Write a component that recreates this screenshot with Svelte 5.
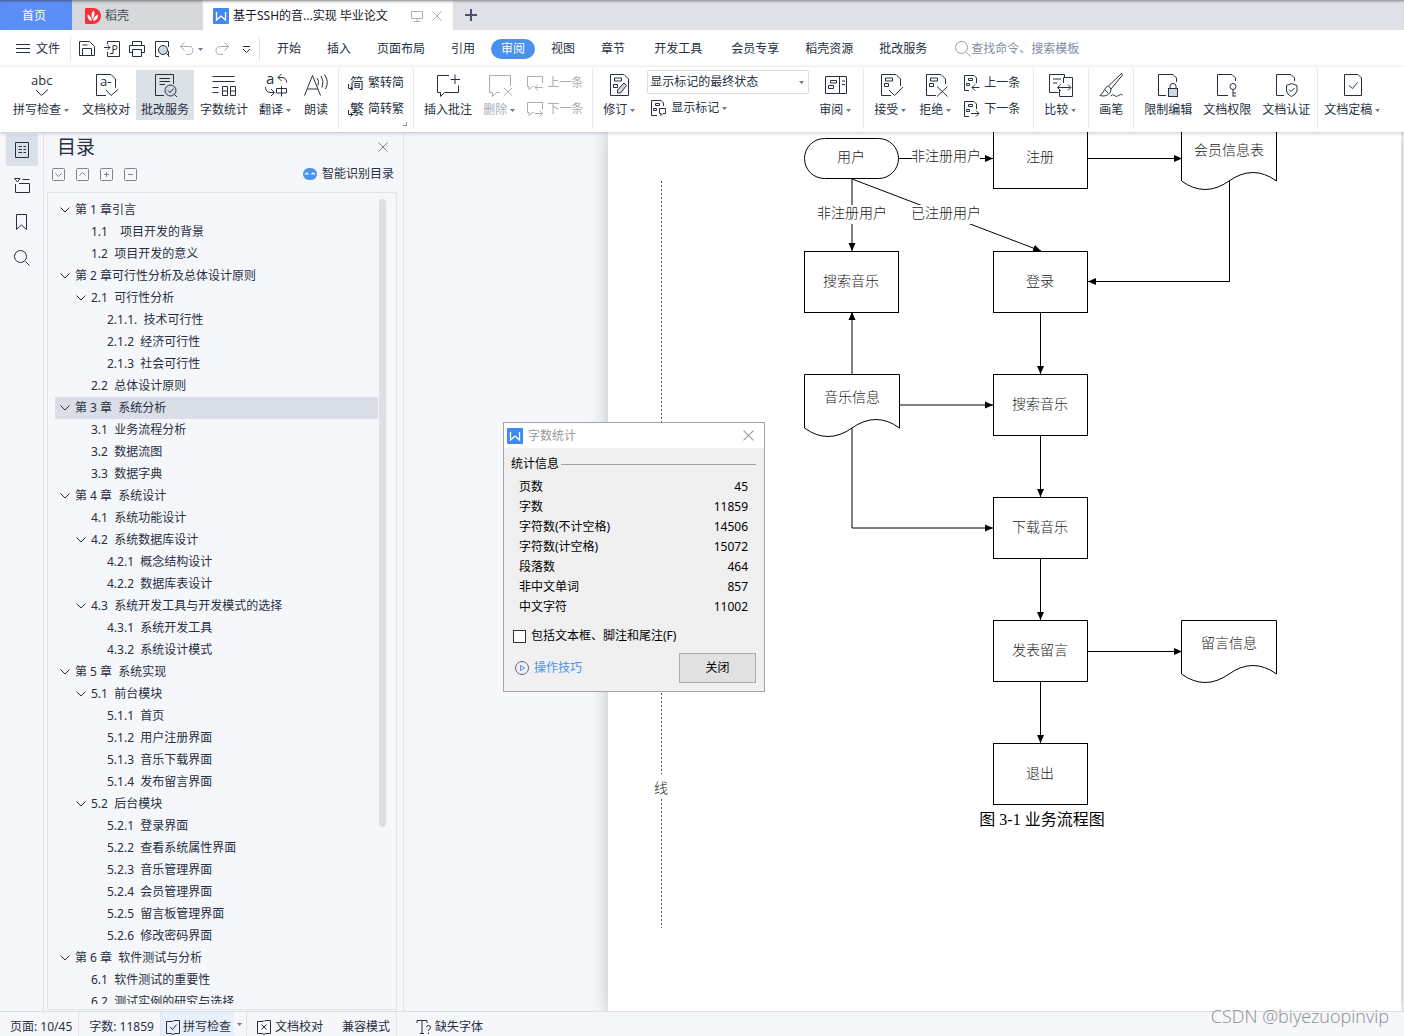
<script lang="ts">
  interface Entry {
    level: number;
    text: string;
    open?: boolean;
    current?: boolean;
  }

  const menus = [
    { label: '开始' },
    { label: '插入' },
    { label: '页面布局' },
    { label: '引用' },
    { label: '审阅', active: true },
    { label: '视图' },
    { label: '章节' },
    { label: '开发工具', wide: true },
    { label: '会员专享' },
    { label: '稻壳资源' },
    { label: '批改服务' }
  ];

  const outline: Entry[] = [
    { level: 1, text: '第 1 章引言', open: true },
    { level: 2, text: '1.1\u3000项目开发的背景' },
    { level: 2, text: '1.2  项目开发的意义' },
    { level: 1, text: '第 2 章可行性分析及总体设计原则', open: true },
    { level: 2, text: '2.1  可行性分析', open: true },
    { level: 3, text: '2.1.1.  技术可行性' },
    { level: 3, text: '2.1.2  经济可行性' },
    { level: 3, text: '2.1.3  社会可行性' },
    { level: 2, text: '2.2  总体设计原则' },
    { level: 1, text: '第 3 章  系统分析', open: true, current: true },
    { level: 2, text: '3.1  业务流程分析' },
    { level: 2, text: '3.2  数据流图' },
    { level: 2, text: '3.3  数据字典' },
    { level: 1, text: '第 4 章  系统设计', open: true },
    { level: 2, text: '4.1  系统功能设计' },
    { level: 2, text: '4.2  系统数据库设计', open: true },
    { level: 3, text: '4.2.1  概念结构设计' },
    { level: 3, text: '4.2.2  数据库表设计' },
    { level: 2, text: '4.3  系统开发工具与开发模式的选择', open: true },
    { level: 3, text: '4.3.1  系统开发工具' },
    { level: 3, text: '4.3.2  系统设计模式' },
    { level: 1, text: '第 5 章  系统实现', open: true },
    { level: 2, text: '5.1  前台模块', open: true },
    { level: 3, text: '5.1.1  首页' },
    { level: 3, text: '5.1.2  用户注册界面' },
    { level: 3, text: '5.1.3  音乐下载界面' },
    { level: 3, text: '5.1.4  发布留言界面' },
    { level: 2, text: '5.2  后台模块', open: true },
    { level: 3, text: '5.2.1  登录界面' },
    { level: 3, text: '5.2.2  查看系统属性界面' },
    { level: 3, text: '5.2.3  音乐管理界面' },
    { level: 3, text: '5.2.4  会员管理界面' },
    { level: 3, text: '5.2.5  留言板管理界面' },
    { level: 3, text: '5.2.6  修改密码界面' },
    { level: 1, text: '第 6 章  软件测试与分析', open: true },
    { level: 2, text: '6.1  软件测试的重要性' },
    { level: 2, text: '6.2  测试实例的研究与选择' }
  ];

  const stats = [
    ['页数', '45'],
    ['字数', '11859'],
    ['字符数(不计空格)', '14506'],
    ['字符数(计空格)', '15072'],
    ['段落数', '464'],
    ['非中文单词', '857'],
    ['中文字符', '11002']
  ];

  // flowchart: process boxes, document shapes, labels
  const boxes = [
    { x: 993, y: 127, label: '注册' },
    { x: 804, y: 251, label: '搜索音乐' },
    { x: 993, y: 251, label: '登录' },
    { x: 993, y: 374, label: '搜索音乐' },
    { x: 993, y: 497, label: '下载音乐' },
    { x: 993, y: 620, label: '发表留言' },
    { x: 993, y: 743, label: '退出' }
  ];
  const sheets = [
    { x: 1181, y: 127, label: '会员信息表' },
    { x: 804, y: 374, label: '音乐信息' },
    { x: 1181, y: 620, label: '留言信息' }
  ];
  const links = [
    'M899 158.5H993',
    'M1088 158.5H1182',
    'M852 179V251',
    'M852 179L1041 251',
    'M1229.5 181V281.5H1088',
    'M852 374V312',
    'M899 405H993',
    'M852 427V528H993',
    'M1040.5 312V374',
    'M1040.5 436V497',
    'M1040.5 559V620',
    'M1040.5 682V743',
    'M1088 651.5H1182'
  ];
  const tags = [
    { x: 946, y: 157, w: 68, label: '非注册用户' },
    { x: 852, y: 214, w: 68, label: '非注册用户' },
    { x: 946, y: 214, w: 68, label: '已注册用户' }
  ];

  // 24px grid, stroked
  const icons: Record<string, string> = {
    spell: 'M6 17L11.5 22.5L18 16.5',
    proof: 'M12 22.5H2.5V1.5H17L21.5 6V14.5M12 17L17 22.5L24 16.5M13.500 9.500H17',
    count: 'M.5 3.5H22.500M.5 8.5H22.500M.5 14.500H6.500M.5 19.500H6.500M10.500 13.500H15.500V22.500H10.500ZM10.500 18H15.500M18.500 13.500H23.500V22.500H18.500ZM18.500 18H23.500',
    translate: 'M17.500 1L14 4.500L17.500 8M14 4.500H18Q22.500 4.500 22.500 9.500M1.500 14Q1.500 19.500 7 19.500H10M7 16L10.500 19.500L7 23',
    read: 'M.5 22.500L8.500 2.500L16.500 22.500M3.500 16H14M13 5Q15.500 8 14 12.500M17 3Q20.500 8 18 14.500M20.500 1.500Q25.500 8.500 21.500 16',
    comment: 'M13 2.500H1.500V19.500H4.500V23.500L8.500 19.500H22.500V12.500M14.500 6.500H24M19 1.500V11',
    remove: 'M12 19.500H8.500L4.500 23.500V19.500H1.500V2.500H22.500V13M16 15L24 22.500M24 15L16 22.500',
    revise: 'M16 1.500H2.500V22.500H20.500V6ZM6.500 5H13.500V8H6.500ZM5.500 11.500H9.500V14.500H5.500Z',
    review: 'M1.500 3.500H22.500V20.500H1.500ZM15.500 3.500V20.500M6.500 7.500H12.500V10H6.500ZM4.500 12.500H9.500V15.500H4.500ZM18 8H21M18 11.500H21',
    accept: 'M12 22.500H2.500V1.500H17L21.500 6V13M6.500 5H13.500V8H6.500ZM5.500 10.500H9.500V13.500H5.500ZM10 17L15.500 22.500L24 14',
    reject: 'M12 22.500H2.500V1.500H17L21.500 6V11M6.500 5H13.500V8H6.500ZM5.500 10.500H9.500V13.500H5.500ZM13 13.500L23.500 23.500M23.500 13.500L13 23.500',
    compare: 'M9.500 19.500H.5V1.500H15.500V4.500M4 6H12M4 10H8M14.500 10V4.500H23.500V23.500H10.500V17M9 14.500H21.500M11.500 11.500L8.500 14.500L11.500 17.500M19 11.500L22 14.500L19 17.500',
    brush: 'M22.500 .5L9.500 13L12 16L23.500 2ZM9.500 13C6 13.500 6 18 1 22.500C6 24 11.500 22 12 16M6 17L9 20M11.500 23Q13.500 20.500 15.500 22.500T19.500 22.500T23.500 22',
    lock: 'M10 22.500H2.500V1.500H17L20.500 5V9M14 15V13Q14 10.500 17 10.500T20 13V15',
    rights: 'M13 22.500H2.500V1.500H17L20.500 5V8M18 16.500V23.500M18 20H21M18 23H21',
    certify: 'M10 22.500H2.500V1.500H17L20.500 5V8M17.500 10.500L23 12.500V18Q22 21.500 17.500 23.500Q13 21.500 12.500 18V12.500ZM15 16.500L17 18.500L20.500 15',
    final: 'M17 1.500H3.500V22.500H20.500V5ZM8 12.500L11.500 15.500L16.500 9.500'
  };

  // 16px grid
  const small: Record<string, string> = {
    prevNote: 'M7 11.500H5.500L2 14.500V11.500H.5V1.500H15.500V8M15.500 12.500H8M11 9.500L8 12.500L11 15.500',
    nextNote: 'M7 11.500H5.500L2 14.500V11.500H.5V1.500H15.500V8M8 12.500H15.500M12.500 9.500L15.500 12.500L12.500 15.500',
    prevEdit: 'M5 15.500H.5V.5H10L12.500 3V8M4.500 3.500H8.500V5.500H4.500ZM2.500 8.500H5.500V10.500H2.500ZM15.500 12.500H8M11 9.500L8 12.500L11 15.500',
    nextEdit: 'M5 15.500H.5V.5H10L12.500 3V8M4.500 3.500H8.500V5.500H4.500ZM2.500 8.500H5.500V10.500H2.500ZM7 12.500H15M12 9.500L15 12.500L12 15.500',
    marks: 'M6 15.500H.5V.5H10L12.500 3V6M4.500 3.500H8.500V5.500H4.500ZM2.500 8.500H5.500V10.500H2.500ZM8.500 8.500H14.500V13.500H12L10 15.500V13.500H8.500Z',
    save: 'M10.500 .5H.5V14.500H15.500V5.500ZM3.500 14.500V7.500H12.500V14.500M3.500 4H8.500',
    pdf: 'M3.500 3V.5H15.500V15.500H3.500V11M0 6.500H6M3.500 4L6 6.500L3.500 9M9 12.500V4.500H11Q13 4.500 13 6.500T11 8.500H9M6 12.500H9',
    print: 'M3.500 4.500V.5H12.500V4.500M3.500 11.500H.5V4.500H15.500V11.500H12.500M3.500 8.500H12.500V15.500H3.500Z',
    preview: 'M5 15.500H1.500V.5H14.500V6M14.500 10V15.500M12.500 12.500L15.500 15.500',
    undo: 'M5.500 1.500L1.500 5.500L5.500 9.500M1.500 5.500H9.500Q14 5.500 14 9.500T9.500 13.500H7',
    redo: 'M10.500 1.500L14.500 5.500L10.500 9.500M14.500 5.500H6.500Q2 5.500 2 9.500T6.500 13.500H9',
    outline: 'M1.500 .5H14.500V15.500H1.500ZM4.500 4.500H8M9.500 4.500H12M4.500 7.500H8M9.500 7.500H12M4.500 10.500H8M9.500 10.500H12',
    nav: 'M.5 .5H6L3.500 4ZM8.500 1.500H15.500M1.500 6V14.500H15.500V5.500H5',
    bookmark: 'M2.500 .5H12.500V15.500L7.500 11L2.500 15.500Z',
    find: 'M11.500 11.500L15.500 15.500',
    book: 'M7 2.500H1.500V14.500H6L8 15.500L10 14.500H14.500V1.500H9L8 2.500L7 1.500',
    font: 'M1 4V1.500H11V4M6 1.500V14.500M4 14.500H8M10.500 8Q10.500 6.500 12.500 6.500T14.500 8.500Q14.500 10 12.500 11V12M12.500 13.500V15'
  };
</script>

{#snippet icon(name: string)}
  <svg class="icon" viewBox="0 0 24 24" width="24" height="24" aria-hidden="true">
    {#if name === 'spell'}
      <text x="1" y="12" class="latin">abc</text>
    {:else if name === 'proof'}
      <text x="6" y="13" class="latin">a</text>
    {:else if name === 'translate'}
      <text x="2" y="11" class="latin wide">a</text>
      <path d="M12.500 15.500H22.500V20H12.500ZM17.500 13V23.500" />
    {:else if name === 'grade'}
      <path d="M11 22.500H2.500V1.500H20.500V11M6.500 5.500H17M6.500 8.500H17M6.500 11.500H12" />
      <circle cx="17.500" cy="17.500" r="5.500" class="shade" />
      <path d="M21.500 21.500L24 24M15 17.500L17 19.500L20.500 15.500" />
    {:else if name === 'lock'}
      <rect x="12.500" y="15.500" width="9" height="8" class="shade" />
    {:else if name === 'rights'}
      <circle cx="18" cy="13.500" r="3" />
    {/if}
    {#if icons[name]}
      <path d={icons[name]} />
    {/if}
    {#if name === 'revise'}
      <path class="shade" d="M16 10L9.500 17V20H12.500L18.500 12.500Z" />
    {/if}
  </svg>
{/snippet}

{#snippet mini(name: string)}
  <svg class="icon" viewBox="0 0 16 16" width="16" height="16" aria-hidden="true">
    {#if name === 'find'}
      <circle cx="6.500" cy="6.500" r="6" />
    {:else if name === 'preview'}
      <circle cx="9" cy="9" r="4.500" class="shade" />
    {/if}
    <path d={small[name]} />
  </svg>
{/snippet}

{#snippet hanIcon(glyph: string)}
  <svg class="icon" viewBox="0 0 16 16" width="16" height="16" aria-hidden="true">
    <text x="2" y="13" class="han">{glyph}</text>
    <path d="M.5 9V13.500H4M2.500 11.500L4.500 13.500L2.500 15.500" />
  </svg>
{/snippet}

{#snippet caret()}
  <svg class="caret" viewBox="0 0 5 3" width="5" height="3" aria-hidden="true"><path d="M0 0H5L2.500 3Z" /></svg>
{/snippet}

{#snippet big(name: string, label: string, drop = false, state = '')}
  <button class="big {state}" disabled={state === 'off'}>
    {@render icon(name)}
    <span class="cap">{label}{#if drop}{@render caret()}{/if}</span>
  </button>
{/snippet}

{#snippet row(name: string, label: string, off = false)}
  <button class="row" class:off disabled={off}>{@render mini(name)}{label}</button>
{/snippet}

{#snippet logo()}
  <svg class="logo" viewBox="0 0 16 16" width="16" height="16" aria-hidden="true">
    <rect width="16" height="16" rx="1" />
    <path d="M3.500 4V12L8 8L12.500 12V4" />
  </svg>
{/snippet}

{#snippet cross(size: number)}
  <svg class="icon" viewBox="0 0 10 10" width={size} height={size} aria-hidden="true"><path d="M.5 .5L9.500 9.500M9.500 .5L.5 9.500" /></svg>
{/snippet}

<div class="app">
  <header>
    <div class="tabs">
      <button class="tab home">首页</button>
      <button class="tab docer">
        <svg viewBox="0 0 16 16" width="16" height="16" aria-hidden="true">
          <path d="M1 0H8A8 8 0 0 1 8 16H1Q0 16 0 15V1Q0 0 1 0Z" fill="#fa2c37" />
          <path d="M7 13Q2 12 2.500 6.500Q6 7.500 7 13ZM7.500 11Q5 6 8.500 2.500Q11 6 7.500 11ZM8 13Q8.500 8 13 6.500Q13.500 12 8 13Z" fill="#fff" />
        </svg>
        稻壳
      </button>
      <div class="tab file">
        {@render logo()}
        <span class="name">基于SSH的音...实现 毕业论文</span>
        <svg class="icon" viewBox="0 0 12 12" width="12" height="12" aria-hidden="true"><path d="M.5 1.500H11.500V8.500H.5ZM6 8.500V11.500M3 11.500H9" /></svg>
        <button class="plain" aria-label="关闭标签">{@render cross(10)}</button>
      </div>
      <button class="plain add" aria-label="新建">
        <svg viewBox="0 0 12 12" width="12" height="12" aria-hidden="true"><path d="M6 0V12M0 6H12" stroke="#48546c" stroke-width="2" /></svg>
      </button>
    </div>

    <div class="menubar">
      <button class="plain filemenu">
        <svg class="icon" viewBox="0 0 14 10" width="14" height="10" aria-hidden="true"><path d="M0 .5H14M0 4.500H14M0 8.500H14" /></svg>
        文件
      </button>
      <div class="quick">
        <button class="plain" aria-label="保存">{@render mini('save')}</button>
        <button class="plain" aria-label="输出为PDF">{@render mini('pdf')}</button>
        <button class="plain" aria-label="打印">{@render mini('print')}</button>
        <button class="plain" aria-label="打印预览">{@render mini('preview')}</button>
        <button class="plain dim undo" aria-label="撤销">{@render mini('undo')}{@render caret()}</button>
        <button class="plain dim" aria-label="恢复">{@render mini('redo')}</button>
        <button class="plain more" aria-label="更多">
          <svg class="icon" viewBox="0 0 9 9" width="9" height="9" aria-hidden="true"><path d="M1 1.500H8M1 4L4.500 7.500L8 4" /></svg>
        </button>
      </div>
      <nav class="menus" aria-label="功能区">
        {#each menus as m}
          <button class="menu" class:active={m.active} class:wide={m.wide}>{m.label}</button>
        {/each}
      </nav>
      <label class="search">
        {@render mini('find')}
        <input type="text" placeholder="查找命令、搜索模板" />
      </label>
    </div>

    <div class="ribbon">
      <div class="group">
        {@render big('spell', '拼写检查', true)}
        {@render big('proof', '文档校对')}
        {@render big('grade', '批改服务', false, 'on')}
        {@render big('count', '字数统计')}
        {@render big('translate', '翻译', true)}
        {@render big('read', '朗读')}
      </div>
      <div class="group">
        <div class="stack">
          <button class="row">{@render hanIcon('简')}繁转简</button>
          <button class="row">{@render hanIcon('繁')}简转繁</button>
        </div>
        <span class="corner"></span>
      </div>
      <div class="group">
        {@render big('comment', '插入批注')}
        {@render big('remove', '删除', true, 'off')}
        <div class="stack">
          {@render row('prevNote', '上一条', true)}
          {@render row('nextNote', '下一条', true)}
        </div>
      </div>
      <div class="group">
        {@render big('revise', '修订', true)}
        <div class="marks">
          <div class="pick">
            <select aria-label="标记状态">
              <option>显示标记的最终状态</option>
            </select>
            {@render caret()}
          </div>
          <button class="row">{@render mini('marks')}<span>显示标记{@render caret()}</span></button>
        </div>
        {@render big('review', '审阅', true)}
      </div>
      <div class="group">
        {@render big('accept', '接受', true)}
        {@render big('reject', '拒绝', true)}
        <div class="stack edits">
          {@render row('prevEdit', '上一条')}
          {@render row('nextEdit', '下一条')}
        </div>
      </div>
      <div class="group">{@render big('compare', '比较', true)}</div>
      <div class="group">{@render big('brush', '画笔')}</div>
      <div class="group tight">
        {@render big('lock', '限制编辑')}
        {@render big('rights', '文档权限')}
        {@render big('certify', '文档认证')}
      </div>
      <div class="group tight last">{@render big('final', '文档定稿', true)}</div>
    </div>
  </header>

  <main>
    <nav class="rail" aria-label="侧边栏">
      <button class="on" aria-label="目录">{@render mini('outline')}</button>
      <button aria-label="章节">{@render mini('nav')}</button>
      <button aria-label="书签">{@render mini('bookmark')}</button>
      <button aria-label="查找">{@render mini('find')}</button>
    </nav>

    <aside class="toc">
      <div class="toc-head">
        <h2>目录</h2>
        <button class="plain" aria-label="关闭目录">{@render cross(10)}</button>
      </div>
      <div class="toc-tools">
        {#each ['M3.500 5.500L6.500 8.500L9.500 5.500', 'M3.500 7.500L6.500 4.500L9.500 7.500', 'M4 6.500H9M6.500 4V9', 'M4 6.500H9'] as d}
          <button class="plain" aria-label="层级">
            <svg class="icon" viewBox="0 0 13 13" width="13" height="13" aria-hidden="true">
              <rect x=".5" y=".5" width="12" height="12" rx="1" />
              <path {d} />
            </svg>
          </button>
        {/each}
        <button class="plain smart">
          <svg viewBox="0 0 14 12" width="14" height="12" aria-hidden="true">
            <rect width="14" height="12" rx="6" fill="#4a94f5" />
            <path d="M2 6.500L4 5L5.500 6.500M8.500 6.500L10 5L12 6.500" fill="none" stroke="#fff" stroke-width="1.2" />
          </svg>
          智能识别目录
        </button>
      </div>
      <div class="tree">
        <ul>
          {#each outline as e}
            <li>
              <button class="entry lv{e.level}" class:current={e.current}>
                <svg class="icon" viewBox="0 0 10 6" width="10" height="6" aria-hidden="true">
                  {#if e.open}<path d="M.5 .5L5 5L9.500 .5" />{/if}
                </svg>
                <span>{e.text}</span>
              </button>
            </li>
          {/each}
        </ul>
        <div class="thumb"></div>
      </div>
    </aside>

    <section class="canvas">
      <article class="page">
        <svg class="flow" viewBox="608 132 793 879" width="793" height="879" role="img" aria-label="业务流程图">
          <defs>
            <marker id="head" viewBox="0 0 8 8" refX="8" refY="4" markerWidth="8" markerHeight="8" markerUnits="userSpaceOnUse" orient="auto">
              <path d="M0 .5L8 4L0 7.500Z" />
            </marker>
          </defs>
          <path class="cut" d="M661.500 181V774M661.500 799V928" />
          <text class="song" x="661" y="793">线</text>
          {#each links as d}
            <path class="edge" {d} marker-end="url(#head)" />
          {/each}
          {#each tags as t}
            <rect x={t.x - t.w / 2} y={t.y - 9} width={t.w} height="19" fill="#fff" />
            <text class="song" x={t.x} y={t.y + 4}>{t.label}</text>
          {/each}
          <rect class="shape" x="804.500" y="138.500" width="94" height="40" rx="20" />
          <text class="song" x="851" y="162">用户</text>
          {#each boxes as b}
            <rect class="shape" x={b.x + 0.5} y={b.y + 0.5} width="94" height="61" />
            <text class="song" x={b.x + 47} y={b.y + 35}>{b.label}</text>
          {/each}
          {#each sheets as s}
            <path class="shape" transform="translate({s.x} {s.y})" d="M.5 54V.5H95.500V54Q72 37 48 54T.5 54Z" />
            <text class="song" x={s.x + 48} y={s.y + 28}>{s.label}</text>
          {/each}
          <text class="title" x="1042" y="825">图 3-1 业务流程图</text>
        </svg>
      </article>
    </section>

    <div class="dialog" role="dialog" aria-labelledby="dlg-title">
      <div class="dlg-head">
        {@render logo()}
        <span id="dlg-title">字数统计</span>
        <button class="plain" aria-label="关闭窗口">{@render cross(11)}</button>
      </div>
      <div class="dlg-body">
        <div class="legend">统计信息</div>
        <table>
          <tbody>
            {#each stats as [k, v]}
              <tr><th scope="row">{k}</th><td>{v}</td></tr>
            {/each}
          </tbody>
        </table>
        <label class="check"><input type="checkbox" />包括文本框、脚注和尾注(F)</label>
        <div class="dlg-foot">
          <a href="#tips">
            <svg viewBox="0 0 14 14" width="14" height="14" aria-hidden="true">
              <circle cx="7" cy="7" r="6.500" fill="none" stroke="#5b6b85" />
              <path d="M5.500 4.500V9.500L9.500 7Z" fill="none" stroke="#4a90f0" />
            </svg>
            操作技巧
          </a>
          <button>关闭</button>
        </div>
      </div>
    </div>
  </main>

  <footer>
    <span class="cell">页面: 10/45</span>
    <span class="cell">字数: 11859</span>
    <button class="cell check-on">
      <span class="hl">
        <svg class="icon" viewBox="0 0 16 16" width="16" height="16" aria-hidden="true"><path d={small.book} /><path d="M5 8L7.500 10.500L11.500 5.500" /></svg>
        拼写检查
      </span>
      {@render caret()}
    </button>
    <button class="cell proof">
      <svg class="icon" viewBox="0 0 16 16" width="16" height="16" aria-hidden="true"><path d={small.book} /><path d="M5.500 5.500L10.500 10.500M10.500 5.500L5.500 10.500" /></svg>
      文档校对
    </button>
    <span class="cell compat">兼容模式</span>
    <button class="cell fonts">{@render mini('font')}缺失字体</button>
    <span class="mark">CSDN @biyezuopinvip</span>
  </footer>
</div>

<style>
  :global(body) {
    background: #f5f7fa;
  }

  .app {
    position: relative;
    display: flex;
    flex-direction: column;
    height: 100vh;
    overflow: hidden;
    font: 12px/16px 'Noto Sans', 'Noto Sans CJK SC', sans-serif;
    color: #262f42;
  }

  button {
    font: inherit;
    color: inherit;
    border: 0;
    padding: 0;
    background: none;
    white-space: nowrap;
  }

  .plain {
    display: flex;
    align-items: center;
  }

  .icon {
    flex: none;
    display: block;
    fill: none;
    stroke: currentColor;
    overflow: visible;
  }

  .icon text {
    fill: currentColor;
    stroke: none;
  }

  .latin {
    font: 13px 'Open Sans', sans-serif;
  }

  .latin.wide {
    font-size: 15px;
  }

  .han {
    font-size: 14px;
  }

  .shade {
    fill: #d3d7de;
  }

  .caret {
    flex: none;
    fill: #6c7890;
    margin: 0 2px 0 3px;
  }

  .logo {
    flex: none;
    fill: #4089f0;
  }

  .logo path {
    fill: none;
    stroke: #fff;
    stroke-width: 1.3;
  }

  /* tabs */
  .tabs {
    display: flex;
    height: 30px;
    background: #dfe1e6;
    box-shadow: inset 0 3px 3px -2px #7c7f86;
  }

  .tab {
    display: flex;
    align-items: center;
    padding-top: 2px;
    box-sizing: border-box;
    box-shadow: inset 0 3px 3px -2px rgba(60, 64, 72, 0.7);
  }

  .home {
    width: 72px;
    padding-left: 22px;
    background: #5c8ef8;
    color: #fff;
  }

  .docer {
    width: 130px;
    gap: 4px;
    padding-left: 13px;
    background: #d6d8db;
    color: #444a55;
  }

  .file {
    width: 250px;
    gap: 4px;
    margin-left: 1px;
    padding-left: 10px;
    background: #fff;
    color: #15181f;
  }

  .file .name {
    width: 174px;
    white-space: nowrap;
  }

  .file .icon {
    color: #a8b0c0;
  }

  .file .plain {
    margin-left: 5px;
  }

  .add {
    padding: 0 12px;
  }

  /* menus */
  .menubar {
    display: flex;
    align-items: center;
    height: 37px;
    padding-top: 1px;
    box-sizing: border-box;
    background: #fff;
  }

  .filemenu {
    gap: 6px;
    height: 24px;
    padding: 0 10px 0 16px;
    border-right: 1px solid #e0e2e8;
  }

  .quick {
    display: flex;
    align-items: center;
    gap: 9px;
    height: 24px;
    padding: 0 8px;
    border-right: 1px solid #e0e2e8;
  }

  .dim {
    color: #a4a8b0;
  }

  .more {
    margin-left: 3px;
  }

  .menus {
    display: flex;
    gap: 6px;
    padding-left: 7px;
  }

  .menu {
    height: 20px;
    padding: 0 10px;
    border-radius: 10px;
  }

  .menu.active {
    background: #4a90ee;
    color: #fff;
  }

  .menu.wide {
    margin: 0 3px;
  }

  .search {
    display: flex;
    align-items: center;
    padding-left: 18px;
    color: #8f9bb0;
  }

  .search input {
    width: 120px;
    border: 0;
    padding: 0;
    font: inherit;
    background: none;
  }

  .search input::placeholder {
    color: #7f8ca3;
    opacity: 1;
  }

  /* ribbon */
  .ribbon {
    position: relative;
    z-index: 1;
    display: flex;
    height: 65px;
    background: #fff;
    box-shadow: 0 1px 4px rgba(60, 68, 84, 0.3);
  }

  .group {
    position: relative;
    display: flex;
    align-items: flex-start;
    gap: 1px;
    height: 61px;
    margin-top: 1px;
    padding: 2px 5px 0;
    box-sizing: border-box;
    border-right: 1px solid #e8eaee;
  }

  .group:first-child {
    padding-left: 8px;
  }

  .tight {
    padding-right: 2px;
  }

  .last {
    padding-left: 1px;
    border: 0;
  }

  .big {
    display: flex;
    flex-direction: column;
    align-items: center;
    gap: 5px;
    height: 50px;
    padding: 3px 5px 0;
  }

  .big .icon {
    height: 24px;
  }

  .cap,
  .row span {
    display: flex;
    align-items: center;
  }

  .big.on {
    background: #dce1e6;
  }

  .off {
    color: #a9adb5;
  }

  .row {
    display: flex;
    align-items: center;
    gap: 4px;
    height: 26px;
    padding: 0 4px;
  }

  .stack.edits {
    padding-left: 1px;
    padding-right: 4px;
  }

  .corner {
    position: absolute;
    right: 6px;
    bottom: 3px;
    width: 3px;
    height: 3px;
    border: solid #8a92a2;
    border-width: 0 1px 1px 0;
  }

  .marks {
    display: flex;
    flex-direction: column;
    align-items: flex-start;
    gap: 1px;
    padding: 0 4px;
  }

  .pick {
    display: flex;
    align-items: center;
  }

  .pick select {
    width: 162px;
    height: 24px;
    padding: 0 18px 0 2px;
    border: 1px solid #dcdfe4;
    border-radius: 2px;
    appearance: none;
    background: #fff;
    font: inherit;
    color: inherit;
  }

  .pick .caret {
    margin-left: -10px;
    margin-right: 5px;
    pointer-events: none;
  }

  /* workspace */
  main {
    position: relative;
    flex: 1;
    display: flex;
    min-height: 0;
    border-bottom: 1px solid #dadde3;
  }

  .rail {
    display: flex;
    flex-direction: column;
    gap: 4px;
    padding: 2px 5px 0 6px;
    border-right: 1px solid #e1e4ea;
  }

  .rail button {
    display: grid;
    place-items: center;
    width: 32px;
    height: 32px;
    border-radius: 2px;
  }

  .rail .on {
    background: #dae0e8;
  }

  .toc {
    display: flex;
    flex-direction: column;
    width: 359px;
    min-height: 0;
    border-right: 1px solid #e1e4ea;
  }

  .toc-head {
    display: flex;
    align-items: center;
    justify-content: space-between;
    height: 30px;
    padding: 0 15px 0 13px;
  }

  .toc-head h2 {
    margin: 0;
    font-size: 19px;
    line-height: 26px;
    font-weight: 400;
  }

  .toc-head .plain,
  .toc-tools {
    color: #7b8492;
  }

  .toc-tools {
    display: flex;
    align-items: center;
    gap: 11px;
    height: 24px;
    padding: 0 9px 0 8px;
  }

  .smart {
    gap: 5px;
    margin-left: auto;
    color: #262f42;
  }

  .tree {
    flex: 1;
    display: flex;
    gap: 1px;
    min-height: 0;
    margin: 6px 6px 1px 3px;
    padding: 6px 10px 5px 7px;
    border: 1px solid #dfe3e9;
    border-radius: 2px;
  }

  .tree ul {
    flex: 1;
    margin: 0;
    padding: 0;
    overflow: hidden;
    list-style: none;
  }

  .entry {
    display: flex;
    align-items: center;
    gap: 5px;
    width: 100%;
    height: 22px;
    padding-left: 5px;
    text-align: left;
  }

  .entry span {
    white-space: pre;
  }

  .lv2 {
    padding-left: 21px;
  }

  .lv3 {
    padding-left: 37px;
  }

  .entry.current {
    background: #d9dee7;
  }

  .thumb {
    width: 7px;
    height: 78%;
    border-radius: 4px;
    background: #dcdfe3;
  }

  .canvas {
    flex: 1;
    display: flex;
    padding: 0 3px 0 204px;
    background: #f5f7fa;
    overflow: hidden;
  }

  .page {
    flex: 1;
    min-width: 0;
    background: #fff;
    box-shadow: 0 0 16px rgba(40, 46, 58, 0.28);
  }

  .flow {
    display: block;
  }

  .edge,
  .shape,
  .cut {
    fill: none;
    stroke: #000;
  }

  .shape {
    fill: #fff;
  }

  .cut {
    stroke: #555;
    stroke-dasharray: 2 2;
  }

  .song {
    font: 300 14px 'Liberation Serif', 'Noto Sans CJK SC', serif;
    text-anchor: middle;
    fill: #222;
  }

  .title {
    font: 16px 'Liberation Serif', 'Noto Sans CJK SC', serif;
    text-anchor: middle;
  }

  /* word count window */
  .dialog {
    position: absolute;
    left: 503px;
    top: 290px;
    width: 260px;
    border: 1px solid #a3a5a8;
    background: #f0f0f0;
    color: #000;
  }

  .dlg-head {
    display: flex;
    align-items: center;
    gap: 5px;
    height: 25px;
    padding: 0 10px 0 3px;
    background: #fff;
    color: #999;
  }

  .dlg-head .plain {
    margin-left: auto;
  }

  .dlg-body {
    padding: 8px 8px 8px 7px;
  }

  .legend {
    display: flex;
    align-items: center;
    gap: 2px;
  }

  .legend::after {
    content: '';
    flex: 1;
    height: 1px;
    background: #a0a0a0;
  }

  table {
    width: 100%;
    margin: 5px 0 11px;
    padding: 0 8px;
    border-spacing: 0;
  }

  th,
  td {
    height: 20px;
    padding: 0;
    font-weight: 400;
    text-align: left;
  }

  td {
    text-align: right;
  }

  .check {
    display: flex;
    align-items: center;
    gap: 5px;
    padding-left: 2px;
  }

  .check input {
    width: 13px;
    height: 13px;
    margin: 0;
    appearance: none;
    border: 1px solid #333;
    background: #fff;
  }

  .dlg-foot {
    display: flex;
    align-items: center;
    justify-content: space-between;
    margin-top: 9px;
    padding-left: 4px;
  }

  .dlg-foot a {
    display: flex;
    align-items: center;
    gap: 5px;
    color: #4a90f0;
    text-decoration: none;
  }

  .dlg-foot button {
    width: 77px;
    height: 30px;
    border: 1px solid #adadad;
    background: #e1e1e1;
  }

  /* status bar */
  footer {
    display: flex;
    align-items: stretch;
    height: 24px;
    padding: 0;
  }

  .cell {
    display: flex;
    align-items: center;
    gap: 3px;
    padding: 6px 6px 0 10px;
    border-right: 1px solid #e1e4ea;
  }

  .check-on {
    padding: 0 2px 0 0;
    gap: 0;
  }

  .hl {
    display: flex;
    align-items: center;
    gap: 2px;
    height: 100%;
    padding: 6px 3px 0 4px;
    box-sizing: border-box;
    background: #e8f1fb;
  }

  .proof {
    padding-right: 9px;
    padding-left: 9px;
    border: 0;
  }

  .fonts {
    padding-left: 19px;
    border: 0;
  }

  .mark {
    position: absolute;
    right: 15px;
    bottom: 8px;
    font: 300 18px/24px 'Open Sans', sans-serif;
    color: #8b8e92;
  }
</style>
